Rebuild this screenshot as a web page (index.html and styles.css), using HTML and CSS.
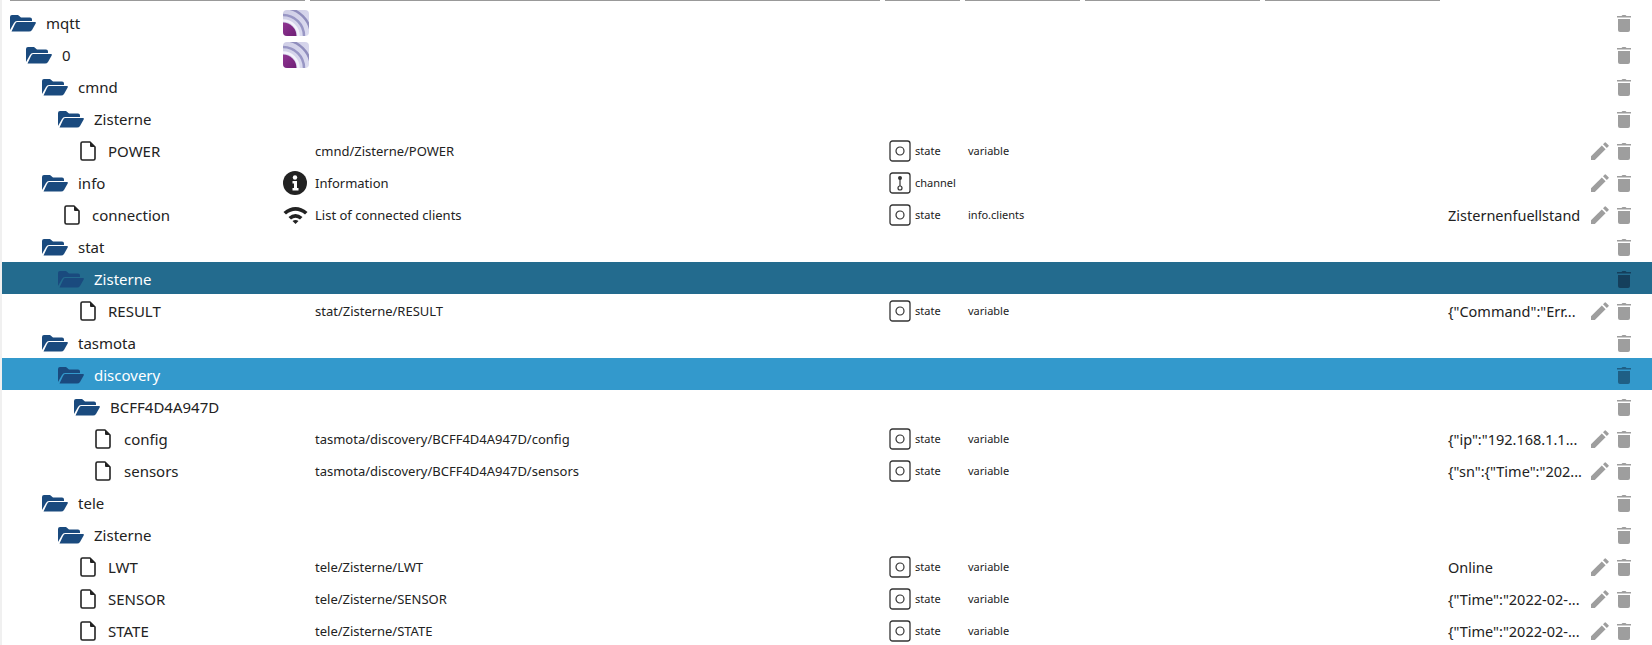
FILE: index.html
```html
<!DOCTYPE html>
<html>
<head>
    <meta charset="UTF-8">
    <title>Objects</title>
    <link rel="stylesheet" href="styles.css">
</head>
<body>
    <svg class="defs" width="0" height="0">
        <clipPath id="adapter-clip"><rect width="26" height="26" rx="4"/></clipPath>
        <linearGradient id="adapter-bg" x1="0" y1="0" x2="1" y2="1">
            <stop offset="0" stop-color="#cfcee6"/>
            <stop offset="1" stop-color="#dcdcf0"/>
        </linearGradient>
        <linearGradient id="adapter-dot" x1="0" y1="0" x2="1" y2="1">
            <stop offset="0" stop-color="#a0409f"/>
            <stop offset="1" stop-color="#5e1468"/>
        </linearGradient>
        <symbol id="folder" viewBox="0 0 26 18">
            <path d="M0 3 Q0 1 2 1 H8 L11 3.500 H20 Q22 3.500 22 5.500 V7 H7 Q5 7 4 9 L0 16 Z"/>
            <path d="M7 8 H25 Q26.500 8 25.500 9.800 L22 16 Q21 17.500 19 17.500 H1.500 L5 10 Q6 8 7 8 Z"/>
        </symbol>
        <symbol id="file" viewBox="0 0 16 20">
            <path d="M2.500 1 H10 L15 6 V17.500 Q15 19 13.500 19 H2.500 Q1 19 1 17.500 V2.500 Q1 1 2.500 1 Z" fill="none" stroke="#222" stroke-width="1.600" stroke-linejoin="round"/>
            <path d="M10 1 L15 6 H11 Q10 6 10 5 Z" fill="#222"/>
        </symbol>
        <symbol id="trash" viewBox="0 0 14 18">
            <path d="M0 2 H4.500 L5.500 1 H8.500 L9.500 2 H14 V3.600 H0 Z"/>
            <path d="M1 5 H13 V16 Q13 18 11 18 H3 Q1 18 1 16 Z"/>
        </symbol>
        <symbol id="pencil" viewBox="0 0 18 18">
            <path d="M0 14.200 L10.800 3.400 L14.600 7.200 L3.800 18 H0 Z"/>
            <path d="M12 2.200 L13.800 0.400 Q14.200 0 14.700 0.400 L17.600 3.300 Q18 3.800 17.600 4.200 L15.800 6 Z"/>
        </symbol>
        <symbol id="state" viewBox="0 0 22 22">
            <rect x="1" y="1" width="20" height="20" rx="2.500" fill="none" stroke="#333" stroke-width="1.300"/>
            <circle cx="11" cy="11" r="4" fill="none" stroke="#333" stroke-width="1.200"/>
        </symbol>
        <symbol id="channel" viewBox="0 0 22 22">
            <rect x="1" y="1" width="20" height="20" rx="2.500" fill="none" stroke="#333" stroke-width="1.300"/>
            <circle cx="11" cy="6" r="2" fill="#333"/>
            <path d="M11 6 V14" stroke="#333" stroke-width="1.200"/>
            <circle cx="11" cy="16" r="2" fill="none" stroke="#333" stroke-width="1.200"/>
        </symbol>
        <symbol id="adapter" viewBox="0 0 26 26">
            <g clip-path="url(#adapter-clip)">
                <rect width="26" height="26" fill="url(#adapter-bg)"/>
                <circle cx="0" cy="26" r="28" fill="none" stroke="#8f8dbc" stroke-width="2.500"/>
                <circle cx="0" cy="26" r="21" fill="none" stroke="#9896c4" stroke-width="2.500"/>
                <circle cx="0" cy="26" r="15.500" fill="none" stroke="#f3f2fb" stroke-width="2.500"/>
                <circle cx="0" cy="26" r="13.500" fill="url(#adapter-dot)"/>
            </g>
        </symbol>
    </svg>

    <div class="header">
        <span class="head-col col-a"></span>
        <span class="head-col col-b"></span>
        <span class="head-col col-c"></span>
        <span class="head-col col-d"></span>
        <span class="head-col col-e"></span>
        <span class="head-col col-f"></span>
    </div>

    <div class="tree">
        <div class="row">
            <div class="name lv0"><svg class="folder"><use href="#folder"/></svg>mqtt</div>
            <div class="icon"><svg class="adapter"><use href="#adapter"/></svg></div>
            <div class="desc"></div><div class="type"></div><div class="role"></div><div class="val"></div>
            <div class="actions"><svg class="trash"><use href="#trash"/></svg></div>
        </div>
        <div class="row">
            <div class="name lv1"><svg class="folder"><use href="#folder"/></svg>0</div>
            <div class="icon"><svg class="adapter"><use href="#adapter"/></svg></div>
            <div class="desc"></div><div class="type"></div><div class="role"></div><div class="val"></div>
            <div class="actions"><svg class="trash"><use href="#trash"/></svg></div>
        </div>
        <div class="row">
            <div class="name lv2"><svg class="folder"><use href="#folder"/></svg>cmnd</div>
            <div class="icon"></div>
            <div class="desc"></div><div class="type"></div><div class="role"></div><div class="val"></div>
            <div class="actions"><svg class="trash"><use href="#trash"/></svg></div>
        </div>
        <div class="row">
            <div class="name lv3"><svg class="folder"><use href="#folder"/></svg>Zisterne</div>
            <div class="icon"></div>
            <div class="desc"></div><div class="type"></div><div class="role"></div><div class="val"></div>
            <div class="actions"><svg class="trash"><use href="#trash"/></svg></div>
        </div>
        <div class="row">
            <div class="name lv3"><svg class="file"><use href="#file"/></svg>POWER</div>
            <div class="icon"></div>
            <div class="desc">cmnd/Zisterne/POWER</div>
            <div class="type"><svg class="type-icon"><use href="#state"/></svg>state</div>
            <div class="role">variable</div><div class="val"></div>
            <div class="actions"><svg class="pencil"><use href="#pencil"/></svg><svg class="trash"><use href="#trash"/></svg></div>
        </div>
        <div class="row">
            <div class="name lv2"><svg class="folder"><use href="#folder"/></svg>info</div>
            <div class="icon">
                <svg class="info" viewBox="0 0 24 24"><circle cx="12" cy="12" r="12" fill="#222"/><circle cx="12" cy="6.500" r="2.200" fill="#fff"/><path d="M9.500 10 H14 V17 H15.500 V19.500 H9.500 V17 H11 V12.500 H9.500 Z" fill="#fff"/></svg>
            </div>
            <div class="desc">Information</div>
            <div class="type"><svg class="type-icon"><use href="#channel"/></svg>channel</div>
            <div class="role"></div><div class="val"></div>
            <div class="actions"><svg class="pencil"><use href="#pencil"/></svg><svg class="trash"><use href="#trash"/></svg></div>
        </div>
        <div class="row">
            <div class="name lv2b"><svg class="file"><use href="#file"/></svg>connection</div>
            <div class="icon">
                <svg class="wifi" viewBox="0 0 24 18"><path d="M0 6 Q12 -4 24 6 L21.500 8.500 Q12 1 2.500 8.500 Z M5 11 Q12 5 19 11 L16.500 13.500 Q12 10 7.500 13.500 Z" fill="#222"/><path d="M9 15 Q12 13 15 15 L12 18 Z" fill="#222"/></svg>
            </div>
            <div class="desc">List of connected clients</div>
            <div class="type"><svg class="type-icon"><use href="#state"/></svg>state</div>
            <div class="role">info.clients</div><div class="val">Zisternenfuellstand</div>
            <div class="actions"><svg class="pencil"><use href="#pencil"/></svg><svg class="trash"><use href="#trash"/></svg></div>
        </div>
        <div class="row">
            <div class="name lv2"><svg class="folder"><use href="#folder"/></svg>stat</div>
            <div class="icon"></div>
            <div class="desc"></div><div class="type"></div><div class="role"></div><div class="val"></div>
            <div class="actions"><svg class="trash"><use href="#trash"/></svg></div>
        </div>
        <div class="row selected">
            <div class="name lv3"><svg class="folder"><use href="#folder"/></svg>Zisterne</div>
            <div class="icon"></div>
            <div class="desc"></div><div class="type"></div><div class="role"></div><div class="val"></div>
            <div class="actions"><svg class="trash"><use href="#trash"/></svg></div>
        </div>
        <div class="row">
            <div class="name lv3"><svg class="file"><use href="#file"/></svg>RESULT</div>
            <div class="icon"></div>
            <div class="desc">stat/Zisterne/RESULT</div>
            <div class="type"><svg class="type-icon"><use href="#state"/></svg>state</div>
            <div class="role">variable</div><div class="val">{"Command":"Err...</div>
            <div class="actions"><svg class="pencil"><use href="#pencil"/></svg><svg class="trash"><use href="#trash"/></svg></div>
        </div>
        <div class="row">
            <div class="name lv2"><svg class="folder"><use href="#folder"/></svg>tasmota</div>
            <div class="icon"></div>
            <div class="desc"></div><div class="type"></div><div class="role"></div><div class="val"></div>
            <div class="actions"><svg class="trash"><use href="#trash"/></svg></div>
        </div>
        <div class="row hover">
            <div class="name lv3"><svg class="folder"><use href="#folder"/></svg>discovery</div>
            <div class="icon"></div>
            <div class="desc"></div><div class="type"></div><div class="role"></div><div class="val"></div>
            <div class="actions"><svg class="trash"><use href="#trash"/></svg></div>
        </div>
        <div class="row">
            <div class="name lv4"><svg class="folder"><use href="#folder"/></svg>BCFF4D4A947D</div>
            <div class="icon"></div>
            <div class="desc"></div><div class="type"></div><div class="role"></div><div class="val"></div>
            <div class="actions"><svg class="trash"><use href="#trash"/></svg></div>
        </div>
        <div class="row">
            <div class="name lv4b"><svg class="file"><use href="#file"/></svg>config</div>
            <div class="icon"></div>
            <div class="desc">tasmota/discovery/BCFF4D4A947D/config</div>
            <div class="type"><svg class="type-icon"><use href="#state"/></svg>state</div>
            <div class="role">variable</div><div class="val">{"ip":"192.168.1.1...</div>
            <div class="actions"><svg class="pencil"><use href="#pencil"/></svg><svg class="trash"><use href="#trash"/></svg></div>
        </div>
        <div class="row">
            <div class="name lv4b"><svg class="file"><use href="#file"/></svg>sensors</div>
            <div class="icon"></div>
            <div class="desc">tasmota/discovery/BCFF4D4A947D/sensors</div>
            <div class="type"><svg class="type-icon"><use href="#state"/></svg>state</div>
            <div class="role">variable</div><div class="val">{"sn":{"Time":"202...</div>
            <div class="actions"><svg class="pencil"><use href="#pencil"/></svg><svg class="trash"><use href="#trash"/></svg></div>
        </div>
        <div class="row">
            <div class="name lv2"><svg class="folder"><use href="#folder"/></svg>tele</div>
            <div class="icon"></div>
            <div class="desc"></div><div class="type"></div><div class="role"></div><div class="val"></div>
            <div class="actions"><svg class="trash"><use href="#trash"/></svg></div>
        </div>
        <div class="row">
            <div class="name lv3"><svg class="folder"><use href="#folder"/></svg>Zisterne</div>
            <div class="icon"></div>
            <div class="desc"></div><div class="type"></div><div class="role"></div><div class="val"></div>
            <div class="actions"><svg class="trash"><use href="#trash"/></svg></div>
        </div>
        <div class="row">
            <div class="name lv3"><svg class="file"><use href="#file"/></svg>LWT</div>
            <div class="icon"></div>
            <div class="desc">tele/Zisterne/LWT</div>
            <div class="type"><svg class="type-icon"><use href="#state"/></svg>state</div>
            <div class="role">variable</div><div class="val">Online</div>
            <div class="actions"><svg class="pencil"><use href="#pencil"/></svg><svg class="trash"><use href="#trash"/></svg></div>
        </div>
        <div class="row">
            <div class="name lv3"><svg class="file"><use href="#file"/></svg>SENSOR</div>
            <div class="icon"></div>
            <div class="desc">tele/Zisterne/SENSOR</div>
            <div class="type"><svg class="type-icon"><use href="#state"/></svg>state</div>
            <div class="role">variable</div><div class="val">{"Time":"2022-02-...</div>
            <div class="actions"><svg class="pencil"><use href="#pencil"/></svg><svg class="trash"><use href="#trash"/></svg></div>
        </div>
        <div class="row">
            <div class="name lv3"><svg class="file"><use href="#file"/></svg>STATE</div>
            <div class="icon"></div>
            <div class="desc">tele/Zisterne/STATE</div>
            <div class="type"><svg class="type-icon"><use href="#state"/></svg>state</div>
            <div class="role">variable</div><div class="val">{"Time":"2022-02-...</div>
            <div class="actions"><svg class="pencil"><use href="#pencil"/></svg><svg class="trash"><use href="#trash"/></svg></div>
        </div>
    </div>
</body>
</html>
```

FILE: styles.css
```css
* {
    margin: 0;
    padding: 0;
    box-sizing: border-box;
}
html, body {
    height: 645px;
    overflow: hidden;
}
body {
    background: white;
    color: #222;
    font-family: "Noto Sans", sans-serif;
    border-left: 2px solid #f0f0f0;
}
.defs {
    display: block;
    height: 0;
}
.header {
    display: flex;
    height: 6px;
    padding-left: 8px;
    gap: 5px;
}
.head-col {
    display: block;
    height: 1px;
    background: #999;
}
.col-a { width: 295px; }
.col-b { width: 570px; }
.col-c { width: 75px; }
.col-d { width: 115px; }
.col-e { width: 175px; }
.col-f { width: 175px; }
.row {
    display: flex;
    align-items: center;
    height: 32px;
    padding-top: 1px;
}
.row.selected {
    background: #236b8e;
    color: white;
}
.row.hover {
    background: #3399cc;
    color: white;
}
.name {
    display: flex;
    align-items: center;
    width: 281px;
    font-size: 15px;
}
.lv0 { padding-left: 8px; }
.lv1 { padding-left: 24px; }
.lv2 { padding-left: 40px; }
.lv2b { padding-left: 62px; }
.lv3 { padding-left: 56px; }
.lv4 { padding-left: 72px; }
.lv4b { padding-left: 93px; }
.lv4b .file { margin-right: 13px; }
.lv3 .file { margin-left: 22px; }
.folder {
    width: 26px;
    height: 18px;
    margin-right: 10px;
    fill: #1a4a7e;
}
.file {
    width: 16px;
    height: 20px;
    margin-right: 12px;
}
.icon {
    display: flex;
    align-items: center;
    width: 32px;
    height: 26px;
}
.adapter {
    width: 26px;
    height: 26px;
}
.info {
    width: 24px;
    height: 24px;
}
.wifi {
    width: 25px;
    height: 18px;
}
.desc {
    width: 574px;
    font-size: 13px;
}
.type {
    display: flex;
    align-items: center;
    width: 79px;
    font-size: 11px;
}
.type-icon {
    width: 22px;
    height: 22px;
    margin-right: 4px;
}
.role {
    width: 480px;
    font-size: 11px;
}
.val {
    width: 142px;
    font-size: 14.500px;
    white-space: nowrap;
}
.actions {
    display: flex;
    align-items: center;
    justify-content: flex-end;
    gap: 8px;
    width: 42px;
    padding-right: 1px;
}
.trash {
    width: 14px;
    height: 18px;
    fill: #9e9e9e;
}
.pencil {
    width: 18px;
    height: 18px;
    flex-shrink: 0;
    fill: #9e9e9e;
}
.selected .trash {
    fill: #153f5c;
}
.hover .trash {
    fill: #1f5f85;
}
```
